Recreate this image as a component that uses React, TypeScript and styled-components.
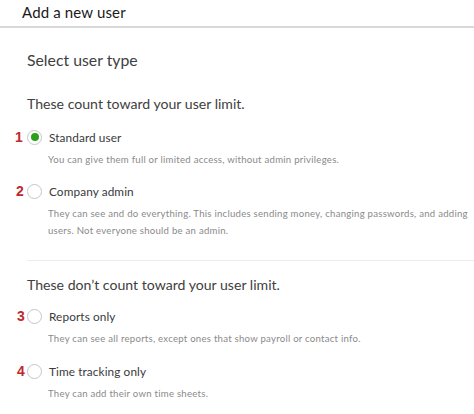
import React from "react";
import styled, { createGlobalStyle } from "styled-components";

const Global = createGlobalStyle`
  html, body { margin: 0; padding: 0; background: #fff; }
  body { font-family: Lato, "Noto Sans", sans-serif; -webkit-font-smoothing: antialiased; }
`;

const Page = styled.div`
  width: 474px;
  height: 414px;
  overflow: hidden;
  background: #fff;
`;

const Header = styled.div`
  height: 28px;
  box-sizing: border-box;
  padding: 3px 0 0 22px;
  border-bottom: 2px solid #d9d9d9;
  font-size: 15px;
  color: #1a1a1a;
  letter-spacing: 0.15px;
`;

const Body = styled.div`
  padding: 20px 0 0 27px;
`;

const Title = styled.div`
  font-size: 15.8px;
  color: #404040;
  letter-spacing: 0;
  line-height: 24px;
`;

const Group = styled.div<{ $top: number }>`
  margin-top: ${(p) => p.$top}px;
`;

const GroupTitle = styled.div`
  font-size: 14.1px;
  color: #404040;
  letter-spacing: 0;
  line-height: 20px;
`;

const Option = styled.div<{ $top: number }>`
  position: relative;
  margin-top: ${(p) => p.$top}px;
`;

const OptionRow = styled.div`
  display: flex;
  align-items: center;
  gap: 7px;
  height: 20px;
`;

const Radio = styled.span<{ $checked?: boolean }>`
  width: 15px;
  height: 15px;
  box-sizing: border-box;
  border-radius: 50%;
  border: 1px solid #c4c6ca;
  display: flex;
  align-items: center;
  justify-content: center;
  background: #fff;
  &::after {
    content: "";
    display: ${(p) => (p.$checked ? "block" : "none")};
    width: 8px;
    height: 8px;
    border-radius: 50%;
    background: #2ca01c;
  }
`;

const Label = styled.span`
  font-size: 11.8px;
  color: #393a3d;
  letter-spacing: 0.1px;
`;

const Marker = styled.span`
  position: absolute;
  top: 2px;
  font-size: 14px;
  font-weight: 700;
  color: #c1272d;
  font-family: "Liberation Sans", Arial, sans-serif;
`;

const Desc = styled.div`
  margin: 4px 0 0 21px;
  font-size: 9.6px;
  line-height: 17px;
  color: #8a8a8a;
  letter-spacing: 0.25px;
  padding-right: 2px;
`;

const Divider = styled.div`
  margin-top: 21px;
  height: 1px;
  background: #ececec;
`;

type Opt = { n: string; label: string; desc: string; checked?: boolean; top: number; mx: number };

const first: Opt[] = [
  { n: "1", label: "Standard user", desc: "You can give them full or limited access, without admin privileges.", checked: true, top: 13, mx: -12 },
  {
    n: "2",
    label: "Company admin",
    desc: "They can see and do everything. This includes sending money, changing passwords, and adding users. Not everyone should be an admin.",
    top: 13,
    mx: -11,
  },
];

const second: Opt[] = [
  { n: "3", label: "Reports only", desc: "They can see all reports, except ones that show payroll or contact info.", top: 11, mx: -10 },
  { n: "4", label: "Time tracking only", desc: "They can add their own time sheets.", top: 14, mx: -10 },
];

const renderOpt = (o: Opt) => (
  <Option key={o.n} $top={o.top}>
    <Marker style={{ left: o.mx }}>{o.n}</Marker>
    <OptionRow>
      <Radio $checked={o.checked} />
      <Label>{o.label}</Label>
    </OptionRow>
    <Desc>{o.desc}</Desc>
  </Option>
);

export default function App() {
  return (
    <Page>
      <Global />
      <Header>Add a new user</Header>
      <Body>
        <Title>Select user type</Title>
        <Group $top={22}>
          <GroupTitle>These count toward your user limit.</GroupTitle>
          {first.map(renderOpt)}
        </Group>
        <Divider />
        <Group $top={14}>
          <GroupTitle>These don’t count toward your user limit.</GroupTitle>
          {second.map(renderOpt)}
        </Group>
      </Body>
    </Page>
  );
}
